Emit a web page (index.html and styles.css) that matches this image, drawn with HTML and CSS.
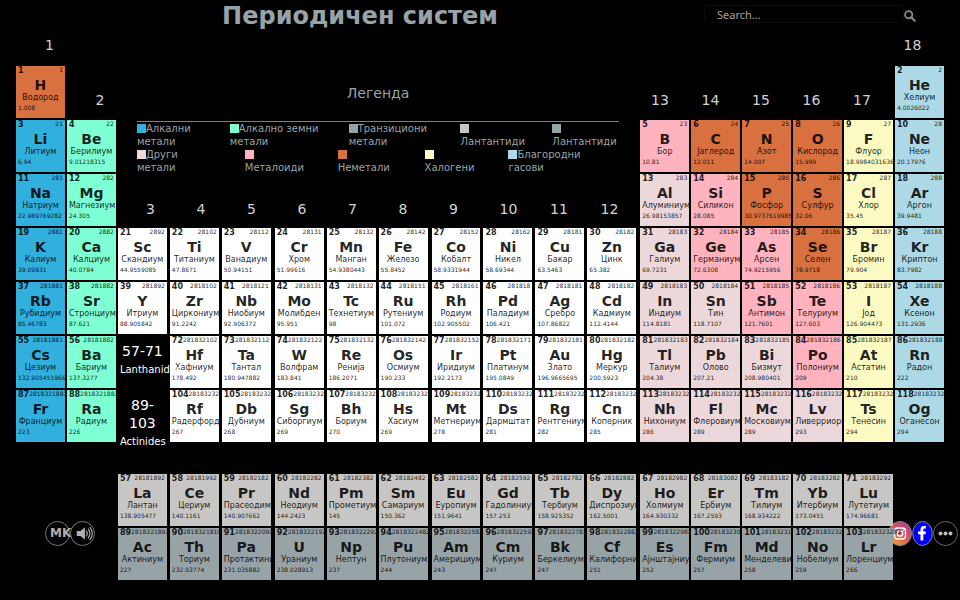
FILE: index.html
```html
<!DOCTYPE html>
<html lang="mk">
<head>
<meta charset="utf-8">
<title>Периодичен систем</title>
<link rel="stylesheet" href="styles.css">
</head>
<body>
<header class="topbar">
  <h1 class="title">Периодичен систем</h1>
  <form class="search">
    <input class="search-input" type="text" placeholder="Search..." aria-label="Search">
    <button class="search-button" type="button" aria-label="Search">
      <svg viewBox="0 0 12 12" width="12" height="12"><circle cx="4.7" cy="4.7" r="3.6" fill="none" stroke="#8a8a8a" stroke-width="1.8"/><path d="M7.5 7.5 L10.7 10.7" stroke="#8a8a8a" stroke-width="2.1" stroke-linecap="round"/></svg>
    </button>
  </form>
</header>
<main class="periodic" id="periodic">
  <div class="groups groups-outer"><span class="g1">1</span><span class="g18">18</span></div>
  <div class="groups groups-main"><span class="g2">2</span><span class="g13">13</span><span>14</span><span>15</span><span>16</span><span>17</span></div>
  <div class="groups groups-transition"><span class="g3">3</span><span>4</span><span>5</span><span>6</span><span>7</span><span>8</span><span>9</span><span>10</span><span>11</span><span>12</span></div>

  <section class="legend">
    <h2 class="legend-title">Легенда</h2>
    <div class="legend-row legend-first">
      <span><i class="swatch alkali"></i>Алкални<br>метали</span>
      <span><i class="swatch earth"></i>Алкално земни<br>метали</span>
      <span><i class="swatch actinide"></i>Транзициони<br>метали</span>
      <span><i class="swatch lanthanide"></i><br>Лантантиди</span>
      <span><i class="swatch actinide"></i><br>Лантантиди</span>
    </div>
    <div class="legend-row legend-second">
      <span><i class="swatch metal"></i>Други<br>метали</span>
      <span><i class="swatch metalloid"></i><br>Металоиди</span>
      <span><i class="swatch nonmetal"></i><br>Неметали</span>
      <span><i class="swatch halogen"></i><br>Халогени</span>
      <span><i class="swatch noble"></i>Благородни<br>гасови</span>
    </div>
  </section>

  <div class="range range-lanthanides"><span class="range-numbers">57-71</span><span class="range-name">Lanthanides</span></div>
  <div class="range range-actinides"><span class="range-numbers">89-103</span><span class="range-name">Actinides</span></div>

  <div class="tools">
    <button class="round language" type="button">MK</button>
    <button class="round" type="button" aria-label="Sound">
      <svg viewBox="0 0 24 24" width="23" height="23"><g fill="#b5aeae"><path d="M6 9.500h4l4.500-4v13l-4.500-4H6z"/></g><g fill="none" stroke="#b5aeae" stroke-width="1.2" stroke-linecap="round"><path d="M16 9.500q2 2.500 0 5"/><path d="M18 7.500q3.500 4.500 0 9"/><path d="M19.800 5.500q5 6.500 0 13"/></g></svg>
    </button>
  </div>
  <div class="social">
    <a class="round-link" href="#" aria-label="Instagram">
      <svg viewBox="0 0 24 25" width="24" height="25"><defs><linearGradient id="insta" x1="0" y1="1" x2="0.800" y2="0"><stop offset="0" stop-color="#f5b32a"/><stop offset=".5" stop-color="#dd6450"/><stop offset="1" stop-color="#b3309a"/></linearGradient></defs><ellipse cx="12" cy="12.500" rx="11.500" ry="12" fill="url(#insta)" stroke="#888"/><g fill="none" stroke="#fff" stroke-width="1.300"><rect x="6.500" y="7" width="11" height="11" rx="3"/><circle cx="12" cy="12.500" r="2.700"/></g><circle cx="15.300" cy="9.300" r=".8" fill="#fff"/></svg>
    </a>
    <a class="round-link" href="#" aria-label="Facebook">
      <svg viewBox="0 0 21 25" width="21" height="25"><ellipse cx="10.500" cy="12.500" rx="9.800" ry="12" fill="#00f" stroke="#888"/><path d="M8.500 19.500v-6.300H6v-2.700h2.500V8.600c0-2.400 1.300-3.500 3.300-3.500h2.100v2.500h-1.300c-1 0-1.300.4-1.300 1.300v1.600h2.600l-.4 2.700h-2.200v6.300z" fill="#fff"/></svg>
    </a>
    <a class="round-link" href="#" aria-label="More">
      <svg viewBox="0 0 25 25" width="25" height="25"><circle cx="12.500" cy="12.500" r="12" fill="#000" stroke="#666"/><g fill="#bbb"><circle cx="7.500" cy="12.500" r="2"/><circle cx="12.500" cy="12.500" r="2"/><circle cx="17.500" cy="12.500" r="2"/></g></svg>
    </a>
  </div>
</main>
<script src="elements.js"></script>
</body>
</html>
```
FILE: styles.css
```css
* { box-sizing: border-box; }

body {
  margin: 0;
  min-height: 100vh;
  overflow-x: hidden;
  background: #000;
  color: #d3d3d3;
  font-family: "DejaVu Sans", sans-serif;
}

button {
  margin: 0;
  padding: 0;
  border: 0;
  background: none;
  color: inherit;
  font: inherit;
}

.topbar {
  display: grid;
  grid-template-columns: 3fr 1fr;
  height: 32px;
}

.title {
  margin: 0;
  font-size: 24px;
  line-height: 32px;
  color: #98a3a8;
  text-align: center;
}

.search {
  display: flex;
  align-items: center;
  margin-right: 44px;
  margin-left: -16px;
  height: 28px;
}

.search-input {
  flex: 1;
  min-width: 0;
  height: 18px;
  padding: 0 12px;
  border: 1px solid #0c0c0c;
  border-radius: 4px;
  background: #000;
  color: #aaa;
  font: 11px "Noto Sans", sans-serif;
}

.search-input::placeholder { color: #a4a4a4; }

.search-button {
  display: flex;
  margin-top: 3px;
}

.periodic {
  display: grid;
  grid-template-columns: 51fr 51fr 52fr 52fr 53fr 52fr 52fr 53fr 52fr 52fr 52fr 53fr 51fr 51fr 50fr 51fr 51fr 51fr;
  grid-template-rows: 33px repeat(7, 54px) 30px repeat(2, 54px);
  padding: 0 15px;
}

.periodic > * { min-width: 0; }

.groups {
  grid-column: 1 / -1;
  display: grid;
  grid-template-columns: repeat(18, 1fr);
  margin-right: -9px;
  padding-left: 30px;
  font-size: 14px;
  line-height: 16px;
}

.groups-outer { grid-row: 1; padding-top: 5px; }
.groups-main { grid-row: 2; padding-top: 27px; }
.groups-transition { grid-row: 4; padding-top: 28px; }
.g1 { grid-column: 1; }
.g2 { grid-column: 2; }
.g3 { grid-column: 3; }
.g13 { grid-column: 13; }
.g18 { grid-column: 18; }

.legend {
  grid-column: 3 / 13;
  grid-row: 2 / 4;
  padding: 0 20px;
  color: #98a3a8;
  font-size: 10px;
  line-height: 13px;
}

.legend-title {
  margin: 0;
  padding: 18px 0;
  border-bottom: 1px solid #808080;
  font-size: 14px;
  font-weight: normal;
  line-height: 20px;
  text-align: center;
}

.legend-row { display: grid; white-space: nowrap; }
.legend-first { grid-template-columns: 93fr 119fr 112fr 92fr 67fr; }
.legend-second { grid-template-columns: 108fr 93fr 87fr 84fr 111fr; }

.swatch {
  display: inline-block;
  width: 9px;
  height: 9px;
  vertical-align: -1px;
}

.element {
  position: relative;
  width: 5.1vw;
  height: 52px;
  margin: 1px;
  padding: 0 2px;
  color: rgba(0, 0, 0, 0.87);
  display: flex;
  flex-direction: column;
  text-align: left;
  white-space: nowrap;
}

.element-top {
  display: flex;
  justify-content: space-between;
  margin-bottom: 2px;
  font-size: 8px;
  line-height: 9px;
}

.electrons {
  font-size: 6px;
  line-height: 8px;
}

.symbol {
  align-self: center;
  font-size: 14px;
  font-weight: bold;
  line-height: 16px;
}

.name {
  min-width: 0;
  margin: 0 auto;
  font-size: 8px;
  line-height: 10px;
}

.mass {
  font-size: 6px;
  line-height: 9px;
}

.alkali { background: #31b0de; }
.earth { background: #7fffd4; }
.transition { background: #fff; }
.metal { background: #ecd7da; }
.metalloid { background: #ffb3be; }
.nonmetal { background: #d97040; }
.halogen { background: #fbfac3; }
.noble { background: #add8e6; }
.lanthanide { background: #c8c6c4; }
.actinide { background: #98a3a8; }

.range {
  position: relative;
  z-index: 1;
  grid-column: 3;
  display: flex;
  flex-direction: column;
  padding: 7px 3px 0;
  color: #fff;
}

.range-lanthanides { grid-row: 7; }
.range-actinides { grid-row: 8; }

.range-numbers {
  width: 45px;
  font-size: 14px;
  line-height: 18px;
  text-align: center;
}

.range-name {
  font-size: 10px;
  line-height: 20px;
}

.tools {
  grid-column: 1 / 3;
  grid-row: 10 / 12;
  align-self: center;
  display: flex;
  padding: 12px 0 0 30px;
}

.round {
  flex: none;
  display: flex;
  align-items: center;
  width: 25px;
  height: 25px;
  border: 1px solid #777;
  border-radius: 50%;
  color: #b5aeae;
}

.language {
  padding-left: 4px;
  font-size: 12px;
  font-weight: bold;
}

.social {
  grid-column: 18;
  grid-row: 10 / 12;
  align-self: center;
  display: flex;
  margin-left: -6px;
  padding-top: 12px;
}

.round-link { display: flex; }
```
FILE: elements.js
```js
// symbol, name, mass, electrons per shell
const ELEMENTS = `H Водород 1.008 1
He Хелиум 4.0026022 2
Li Литиум 6.94 21
Be Берилиум 9.01218315 22
B Бор 10.81 23
C Јаглерод 12.011 24
N Азот 14.007 25
O Кислород 15.999 26
F Флуор 18.9984031636 27
Ne Неон 20.17976 28
Na Натриум 22.989769282 281
Mg Магнезиум 24.305 282
Al Алуминиум 26.98153857 283
Si Силикон 28.085 284
P Фосфор 30.9737619985 285
S Сулфур 32.06 286
Cl Хлор 35.45 287
Ar Аргон 39.9481 288
K Калиум 39.09831 2881
Ca Калциум 40.0784 2882
Sc Скандиум 44.9559085 2892
Ti Титаниум 47.8671 28102
V Ванадиум 50.94151 28112
Cr Хром 51.99616 28131
Mn Манган 54.9380443 28132
Fe Железо 55.8452 28142
Co Кобалт 58.9331944 28152
Ni Никел 58.69344 28162
Cu Бакар 63.5463 28181
Zn Цинк 65.382 28182
Ga Галиум 69.7231 28183
Ge Германиум 72.6308 28184
As Арсен 74.9215956 28185
Se Селен 78.9718 28186
Br Бромин 79.904 28187
Kr Криптон 83.7982 28188
Rb Рубидиум 85.46783 281881
Sr Стронциум 87.621 281882
Y Итриум 88.905842 281892
Zr Циркониум 91.2242 2818102
Nb Ниобиум 92.906372 2818121
Mo Молибден 95.951 2818131
Tc Технетиум 98 2818132
Ru Рутениум 101.072 2818151
Rh Родиум 102.905502 2818161
Pd Паладиум 106.421 281818
Ag Сребро 107.86822 2818181
Cd Кадмиум 112.4144 2818182
In Индиум 114.8181 2818183
Sn Тин 118.7107 2818184
Sb Антимон 121.7601 2818185
Te Телуриум 127.603 2818186
I Јод 126.904473 2818187
Xe Ксенон 131.2936 2818188
Cs Цезиум 132.905451966 28181881
Ba Бариум 137.3277 28181882
La Лантан 138.905477 28181892
Ce Цериум 140.1161 28181992
Pr Прасеодимиум 140.907662 28182182
Nd Неодиум 144.2423 28182282
Pm Прометиум 145 28182382
Sm Самариум 150.362 28182482
Eu Еуропиум 151.9641 28182582
Gd Гадолиниум 157.253 28182592
Tb Тербиум 158.925352 28182782
Dy Диспрозиум 162.5001 28182882
Ho Холмиум 164.930332 28182982
Er Ербиум 167.2593 28183082
Tm Тилиум 168.934222 28183182
Yb Итербиум 173.0451 28183282
Lu Лутетиум 174.96681 28183292
Hf Хафниум 178.492 281832102
Ta Тантал 180.947882 281832112
W Волфрам 183.841 281832122
Re Ренија 186.2071 281832132
Os Осмиум 190.233 281832142
Ir Иридиум 192.2173 281832152
Pt Платинум 195.0849 281832171
Au Злато 196.9665695 281832181
Hg Меркур 200.5923 281832182
Tl Талиум 204.38 281832183
Pb Олово 207.21 281832184
Bi Бизмут 208.980401 281832185
Po Полониум 209 281832186
At Астатин 210 281832187
Rn Радон 222 281832188
Fr Франциум 223 2818321881
Ra Радиум 226 2818321882
Ac Актиниум 227 2818321892
Th Ториум 232.03774 28183218102
Pa Протактиниум 231.035882 2818322092
U Ураниум 238.028913 2818322192
Np Нептун 237 2818322292
Pu Плутониум 244 2818322482
Am Америциум 243 2818322582
Cm Куриум 247 2818322592
Bk Беркелиум 247 2818322782
Cf Калифорниум 251 2818322882
Es Ајнштајниум 252 2818322982
Fm Фермиум 257 2818323082
Md Менделевиум 258 2818323182
No Нобелиум 259 2818323282
Lr Лоренциум 266 2818323283
Rf Радерфорд 267 28183232102
Db Дубниум 268 28183232112
Sg Сиборгиум 269 28183232122
Bh Бориум 270 28183232132
Hs Хасиум 269 28183232142
Mt Метнериум 278 28183232152
Ds Дармштат 281 28183232171
Rg Рентгениум 282 28183232181
Cn Коперник 285 28183232182
Nh Нихониум 286 28183232183
Fl Флеровиум 289 28183232184
Mc Московиум 289 28183232185
Lv Ливерриориум 293 28183232186
Ts Тенесин 294 28183232187
Og Оганесон 294 28183232188`.split("\n").map(line => line.split(" "));

const KINDS = {
  nonmetal: [1, 6, 7, 8, 15, 16, 34],
  metalloid: [5, 14, 32, 33, 51, 52, 84],
  metal: [13, 31, 49, 50, 81, 82, 83, 113, 114, 115, 116]
};

function place(n) {
  if (n >= 57 && n <= 71) return [n - 54, 10];
  if (n >= 89 && n <= 103) return [n - 86, 11];
  if (n === 1) return [1, 2];
  if (n === 2) return [18, 2];
  if (n <= 10) return [n <= 4 ? n - 2 : n + 8, 3];
  if (n <= 18) return [n <= 12 ? n - 10 : n, 4];
  if (n <= 36) return [n - 18, 5];
  if (n <= 54) return [n - 36, 6];
  if (n <= 86) return [n <= 56 ? n - 54 : n - 68, 7];
  return [n <= 88 ? n - 86 : n - 100, 8];
}

function kindOf(n, column, row) {
  for (const kind in KINDS) if (KINDS[kind].includes(n)) return kind;
  if (row === 10) return "lanthanide";
  if (row === 11) return "actinide";
  return { 1: "alkali", 2: "earth", 17: "halogen", 18: "noble" }[column] || "transition";
}

const table = document.getElementById("periodic");
ELEMENTS.forEach(([symbol, name, mass, electrons], index) => {
  const n = index + 1;
  const [column, row] = place(n);
  const cell = document.createElement("button");
  cell.type = "button";
  cell.className = "element " + kindOf(n, column, row);
  cell.style.gridColumn = column;
  cell.style.gridRow = row;
  cell.innerHTML = `<span class="element-top"><b>${n}</b><span class="electrons">${electrons}</span></span>` +
    `<span class="symbol">${symbol}</span><span class="name">${name}</span><span class="mass">${mass}</span>`;
  table.append(cell);
});
```
